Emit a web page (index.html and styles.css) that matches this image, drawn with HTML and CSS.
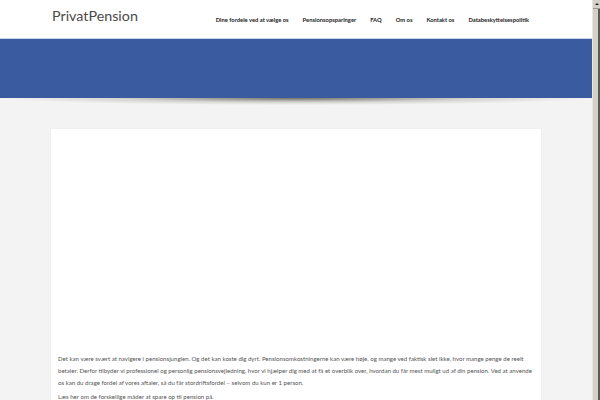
FILE: index.html
```html
<!DOCTYPE html>
<html lang="da">
<head>
<meta charset="utf-8">
<title>PrivatPension</title>
<link rel="stylesheet" href="styles.css">
</head>
<body>
<div class="page">
  <div class="main">
    <header class="header">
      <div class="logo">PrivatPension</div>
      <nav class="nav">
        <a>Dine fordele ved at vælge os</a>
        <a>Pensionsopsparinger</a>
        <a>FAQ</a>
        <a>Om os</a>
        <a>Kontakt os</a>
        <a>Databeskyttelsespolitik</a>
      </nav>
    </header>
    <div class="band"></div>
    <div class="shadow"></div>
    <section class="card">
      <div class="media"></div>
      <p class="text">Det kan være svært at navigere i pensionsjunglen. Og det kan koste dig dyrt. Pensionsomkostningerne kan være høje, og mange ved faktisk slet ikke, hvor mange penge de reelt<br>betaler. Derfor tilbyder vi professionel og personlig pensionsvejledning, hvor vi hjælper dig med at få et overblik over, hvordan du får mest muligt ud af din pension. Ved at anvende<br>os kan du drage fordel af vores aftaler, så du får stordriftsfordel – selvom du kun er 1 person.</p>
      <p class="text">Læs her om de forskellige måder at spare op til pension på.</p>
    </section>
  </div>
  <div class="scrollbar">
    <div class="sb-btn">
      <svg width="6" height="6" viewBox="0 0 6 6"><path d="M1 4 L3 2 L5 4 Z" fill="#222"/></svg>
    </div>
    <div class="sb-track"></div>
  </div>
</div>
</body>
</html>
```
FILE: styles.css
```css
html, body {
  margin: 0;
  padding: 0;
  height: 100%;
  overflow: hidden;
}
body {
  font-family: Lato, "Open Sans", sans-serif;
  background: #f3f3f3;
}
.page {
  display: flex;
  height: 400px;
}
.main {
  flex: 1;
  background: #f3f3f3;
  overflow: hidden;
}
.header {
  height: 38px;
  background: #fff;
  border-bottom: 1px solid #c9d3ea;
  display: flex;
  align-items: center;
  justify-content: space-between;
  padding: 0 63px 0 52px;
}
.logo {
  font-family: Lato, sans-serif;
  font-size: 14.3px;
  font-weight: 400;
  color: #4a4a4a;
  margin-top: -7px;
}
.nav {
  display: flex;
  gap: 14px;
  font-family: Lato, sans-serif;
  font-size: 5.8px;
  font-weight: 700;
  color: #222;
  margin-top: 1px;
}
.band {
  height: 59px;
  background: #3b5ba1;
}
.shadow {
  height: 31px;
  background:
    radial-gradient(ellipse 50% 7px at 50% 0, rgba(60,60,50,0.7), rgba(120,120,110,0.25) 60%, rgba(243,243,243,0) 100%),
    #f3f3f3;
}
.card {
  margin: 0 51px;
  background: #fff;
  padding: 0 7px 10px;
  height: 300px;
  box-shadow: 0 0 2px rgba(0,0,0,0.05);
}
.media {
  height: 224px;
}
.text {
  margin: 0 0 2px;
  font-family: Lato, sans-serif;
  font-size: 6.08px;
  line-height: 12px;
  color: #555;
  white-space: nowrap;
}
.scrollbar {
  width: 8px;
  display: flex;
  flex-direction: column;
  background: #d4d0c8;
  border-left: 1px solid #e8e6e0;
  box-sizing: border-box;
}
.sb-btn {
  height: 8px;
  display: flex;
  align-items: center;
  justify-content: center;
  background: #d4d0c8;
  border-bottom: 1px solid #9a978f;
}
.sb-track {
  flex: 1;
  background: #d4d0c8;
  border-right: 2px solid #5a5a55;
}
```
